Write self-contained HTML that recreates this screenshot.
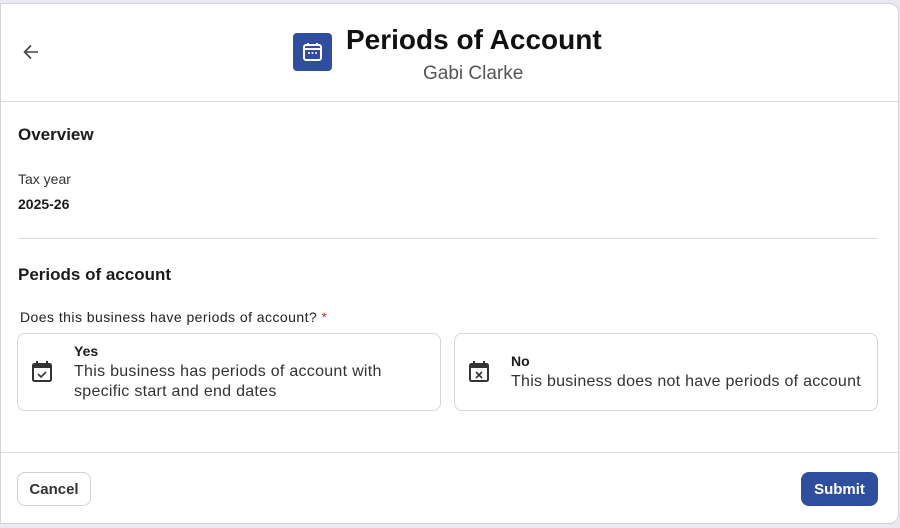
<!DOCTYPE html>
<html><head><style>
*{box-sizing:border-box;margin:0;padding:0}
body{width:900px;height:528px;background:#e9e9ef;font-family:"Liberation Sans",sans-serif;color:#1b1b1b;position:relative;overflow:hidden}
.card{position:absolute;left:0;top:3px;width:899px;height:521px;background:#fff;border:1px solid #d4d4d8;border-radius:0 10px 10px 0}
.abs{position:absolute}
.hdr{position:absolute;left:0;top:98px;width:899px;border-top:1px solid #dcdcdc}
.opt{position:absolute;top:333px;height:78px;width:424px;border:1px solid #d6d6d6;border-radius:8px}
.btn{position:absolute;top:472px;height:34px;border-radius:8px;font-weight:bold;font-size:15px;display:flex;align-items:center;justify-content:center}
</style></head><body>
<div class="card"></div>
<svg class="abs" style="left:21px;top:42px" width="20" height="20" viewBox="0 0 20 20"><path d="M17 10H4M10 3.5L3.5 10 10 16.5" fill="none" stroke="#444" stroke-width="1.6"/></svg>
<div class="abs" style="left:293px;top:33px;width:39px;height:38px;background:#2f4f9e;border-radius:4px"></div>
<svg class="abs" style="left:302px;top:41px" width="21" height="22" viewBox="0 0 21 22"><rect x="2" y="4" width="17" height="15" rx="2" fill="none" stroke="#fff" stroke-width="2"/><line x1="2" y1="8" x2="19" y2="8" stroke="#fff" stroke-width="2"/><path d="M6 2v3M15 2v3" stroke="#fff" stroke-width="2"/><circle cx="7" cy="12" r="1" fill="#fff"/><circle cx="10.5" cy="12" r="1" fill="#fff"/><circle cx="14" cy="12" r="1" fill="#fff"/></svg>
<div class="abs" style="left:346px;top:24px;font-size:28px;font-weight:bold;color:#111">Periods of Account</div>
<div class="abs" style="left:423px;top:63px;font-size:19px;color:#555">Gabi Clarke</div>
<div class="hdr" style="top:101px"></div>
<div class="abs" style="left:18px;top:125px;font-size:17px;font-weight:bold">Overview</div>
<div class="abs" style="left:18px;top:171px;font-size:14px;color:#333">Tax year</div>
<div class="abs" style="left:18px;top:196px;font-size:14px;font-weight:bold">2025-26</div>
<div class="abs" style="left:18px;top:238px;width:860px;border-top:1px solid #dcdcdc"></div>
<div class="abs" style="left:18px;top:265px;font-size:17px;font-weight:bold">Periods of account</div>
<div class="abs" style="left:20px;top:309px;font-size:14px;color:#222;letter-spacing:.45px">Does this business have periods of account? <span style="color:#c0392b">*</span></div>
<div class="opt" style="left:17px"></div>
<svg class="abs" style="left:31px;top:360px" width="22" height="24" viewBox="0 0 22 24"><rect x="2" y="4" width="18" height="17" rx="1.5" fill="none" stroke="#333" stroke-width="2"/><rect x="2" y="4" width="18" height="4" fill="#333"/><path d="M6 1v4M16 1v4" stroke="#333" stroke-width="2"/><path d="M7 14l3 3 5-5" fill="none" stroke="#333" stroke-width="1.6"/></svg>
<div class="abs" style="left:74px;top:343px;font-size:14px;font-weight:bold">Yes</div>
<div class="abs" style="left:74px;top:362px;font-size:16px;line-height:20px;color:#333;letter-spacing:.28px">This business has periods of account with<br>specific start and end dates</div>
<div class="opt" style="left:454px"></div>
<svg class="abs" style="left:468px;top:360px" width="22" height="24" viewBox="0 0 22 24"><rect x="2" y="4" width="18" height="17" rx="1.5" fill="none" stroke="#333" stroke-width="2"/><rect x="2" y="4" width="18" height="4" fill="#333"/><path d="M6 1v4M16 1v4" stroke="#333" stroke-width="2"/><path d="M8 12l6 6M14 12l-6 6" stroke="#333" stroke-width="1.6"/></svg>
<div class="abs" style="left:511px;top:353px;font-size:14px;font-weight:bold">No</div>
<div class="abs" style="left:511px;top:372px;font-size:16px;line-height:20px;color:#333;letter-spacing:.26px">This business does not have periods of account</div>
<div class="abs" style="left:0;top:452px;width:899px;border-top:1px solid #dcdcdc"></div>
<div class="btn" style="left:17px;width:74px;border:1px solid #d0d0d0;color:#333">Cancel</div>
<div class="btn" style="left:801px;width:77px;background:#2f4f9e;color:#fff">Submit</div>
</body></html>
